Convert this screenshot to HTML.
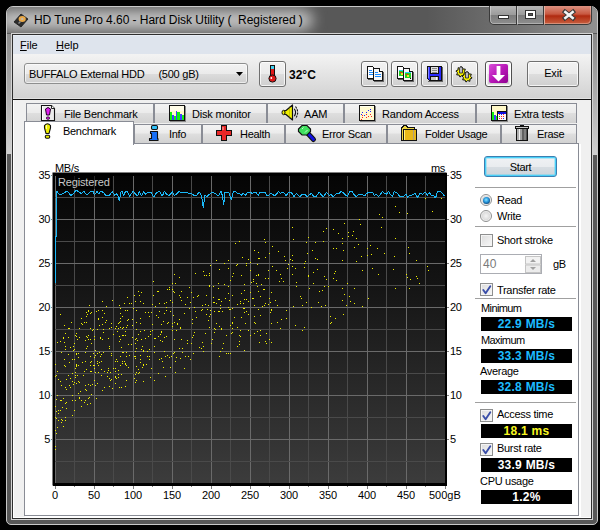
<!DOCTYPE html>
<html><head><meta charset="utf-8"><style>
*{margin:0;padding:0;box-sizing:border-box}
html,body{width:600px;height:530px;overflow:hidden;background:#000;position:relative;font-family:"Liberation Sans",sans-serif}
.t{position:absolute;line-height:13px;white-space:nowrap}
#frame{position:absolute;left:6px;top:6px;width:592px;height:519px;background:#585858;border:1px solid #c8c8c8;border-radius:7px 7px 5px 5px}
#tclip{position:absolute;left:7px;top:7px;width:590px;height:26px;overflow:hidden;border-radius:6px 6px 0 0}
#tright{position:absolute;left:420px;top:0;width:170px;height:26px;background:linear-gradient(90deg,rgba(190,190,190,0) 0%,rgba(190,190,190,0.25) 50%,rgba(190,190,190,0.55) 100%)}
#glow{position:absolute;left:-10px;top:3px;width:316px;height:20px;border-radius:10px;background:#c4c4c4;filter:blur(7px)}
#refl-l{position:absolute;left:7px;top:34px;width:4px;height:120px;background:linear-gradient(#8c8c8c,#d0d0d0)}
#refl-r{position:absolute;left:593px;top:34px;width:4px;height:121px;background:linear-gradient(#888,#d0d0d0)}
#cap{position:absolute;left:489px;top:6px;width:103px;height:19px}
#cmin,#cmax,#cclose{position:absolute;top:0;height:19px;border:1px solid #3a3a3a;border-top:none}
#cmin{left:0;width:28px;border-radius:0 0 0 5px;background:linear-gradient(#b4b4b4,#9c9c9c 48%,#7c7c7c 52%,#8e8e8e);box-shadow:inset 1px 0 0 rgba(255,255,255,0.35),inset 0 -1px 0 rgba(255,255,255,0.3)}
#cmax{left:28px;width:27px;border-left:1px solid #c8c8c8;background:linear-gradient(#b4b4b4,#9c9c9c 48%,#7c7c7c 52%,#8e8e8e);box-shadow:inset 0 -1px 0 rgba(255,255,255,0.3)}
#cclose{left:55px;width:48px;border-radius:0 0 5px 0;border-left:1px solid #e0b0a0;background:linear-gradient(#dc9080,#c85840 45%,#b02a10 55%,#c86040);box-shadow:inset -1px -1px 0 rgba(255,255,255,0.3)}
#client{position:absolute;left:11px;top:33px;width:582px;height:487px;border:1px solid #d4d4d4;background:#2e2e2e}
#client::after{content:"";position:absolute;left:1px;top:1px;right:1px;bottom:1px;background:#f0f0f0;border-left:1px solid #fff;border-bottom:1px solid #fff}
#menubar{position:absolute;left:13px;top:35px;width:578px;height:19px;background:#dee4ed;border-top:1px solid #e8eef6}
#toolbar{position:absolute;left:13px;top:54px;width:578px;height:45px;background:linear-gradient(#f3f3f3 0%,#d2d2d2 97.7%,#e2e2e2 97.8%,#e2e2e2 100%)}
#tbline{position:absolute;left:13px;top:99px;width:578px;height:1px;background:#101010}
#combo{position:absolute;left:24px;top:63px;width:224px;height:21px;border:1px solid #8e8f8f;border-radius:3px;background:linear-gradient(#f2f2f2 0%,#ebebeb 50%,#dddddd 51%,#cfcfcf 100%);box-shadow:inset 0 0 0 1px rgba(255,255,255,0.6)}
.btn{position:absolute;border:1px solid #707070;border-radius:3px;background:linear-gradient(#f2f2f2 0%,#ebebeb 50%,#dddddd 51%,#cfcfcf 100%);box-shadow:inset 0 0 0 1px rgba(255,255,255,0.75)}
.btn.focus{border-color:#505050;box-shadow:inset 0 0 0 1px #fff, inset 0 0 0 2px rgba(255,255,255,0.5)}
.tab{position:absolute;border:1px solid #898c95;border-bottom:none;background:linear-gradient(#f3f3f3 0%,#ebebeb 45%,#dedede 50%,#d2d2d2 100%)}
#panel{position:absolute;left:24px;top:143px;width:555px;height:373px;border:1px solid #898c95;background:#fff;box-shadow:1px 1px 0 #fff,2px 1px 0 #fff}
#seltab{position:absolute;left:24px;top:121px;width:110px;height:24px;border:1px solid #898c95;border-bottom:none;background:#fff}
#start{position:absolute;left:484px;top:156px;width:73px;height:21px;border:1px solid #3c7fb1;border-radius:3px;background:linear-gradient(#f0f2f4 0%,#e9ecef 50%,#d8dee3 51%,#cdd4da 100%);box-shadow:inset 0 0 0 1px #48d0f8,inset 0 0 0 2px rgba(72,208,248,0.35);font-size:11px;line-height:21px;text-align:center;letter-spacing:-0.3px}
.sep{position:absolute;left:475px;width:101px;height:2px;border-top:1px solid #a0a0a0;border-bottom:1px solid #fff}
.radio{position:absolute;width:12px;height:12px;border-radius:50%;border:1px solid #8e8f8f;background:radial-gradient(circle at 50% 50%,#f4f4f4 0%,#dcdcdc 55%,#fafafa 70%,#ffffff 100%)}
.radio.on::after{content:"";position:absolute;left:1.5px;top:1.5px;width:7px;height:7px;border-radius:50%;background:radial-gradient(circle at 45% 40%,#8ae4ff 0%,#2a9ae0 40%,#0a4a80 75%,#1a2a40 100%)}
.chk{position:absolute;width:13px;height:13px;border:1px solid #8e8f8f;background:linear-gradient(135deg,#dcdcdc,#f8f8f8);box-shadow:inset 0 0 0 1px #f4f4f4}
.chk svg{position:absolute;left:0;top:0}
#spin{position:absolute;left:480px;top:254px;width:62px;height:20px;border:1px solid #abadb3;background:#fff;font-size:11px}
#spin span{position:absolute;left:2px;top:3px;color:#7a7a7a;line-height:13px;font-size:12px}
#spinbtn{position:absolute;left:44px;top:1px;width:15px;height:16px;border:1px solid #c8c8c8;background:linear-gradient(#f0f0f0,#e0e0e0)}
.vb{position:absolute;left:481px;width:91px;height:14px;background:#000;font-weight:bold;font-size:12px;line-height:14px;text-align:center;letter-spacing:0.25px}
</style></head>
<body>
<div id="frame"></div>
<div id="tclip"><div id="glow"></div><div id="tright"></div></div>
<div id="refl-l"></div><div id="refl-r"></div>
<div id="cap"><div id="cmin"></div><div id="cmax"></div><div id="cclose"></div></div>
<svg style="position:absolute;left:0;top:0;z-index:4" width="600" height="30" viewBox="0 0 600 30">
<rect x="498.5" y="15.5" width="10" height="3" fill="#fff" stroke="#333" stroke-width="1"/>
<rect x="525.5" y="10.5" width="10" height="8" fill="none" stroke="#333" stroke-width="1"/>
<rect x="527" y="12" width="7" height="5" fill="none" stroke="#fff" stroke-width="2"/>
<rect x="528.5" y="13.5" width="4" height="2" fill="#555" stroke="#333" stroke-width="1"/>
<path d="M565 11.8L573 18.2M573 11.8L565 18.2" stroke="#3a3a3a" stroke-width="4.4" stroke-linecap="square"/>
<path d="M565.3 12L572.7 18M572.7 12L565.3 18" stroke="#f4f4f4" stroke-width="2.5" stroke-linecap="square"/>
</svg>
<svg style="position:absolute;left:13px;top:12px" width="16" height="16" viewBox="0 0 16 16">
<path d="M1 10 L8 2 L15 7 L8 15 Z" fill="#2c2c2c" stroke="#1a1a1a" stroke-width="0.8"/>
<ellipse cx="9.2" cy="7" rx="3.6" ry="3" fill="#e8a848"/>
<ellipse cx="9.2" cy="7" rx="1.2" ry="1" fill="#bbb"/>
<path d="M5 11 L7 9 L8 10 L6 12Z" fill="#888"/>
</svg>
<div class="t" style="left:34px;top:14px;font-size:12px;color:#000;letter-spacing:-0.05px;white-space:pre;">HD Tune Pro 4.60 - Hard Disk Utility (&nbsp; Registered )</div>
<div id="client"></div>
<div id="menubar"></div>
<div id="toolbar"></div>
<div id="tbline"></div>
<div class="t" style="left:20px;top:39px;font-size:11px;color:#000;"><u>F</u>ile</div>
<div class="t" style="left:56px;top:39px;font-size:11px;color:#000;"><u>H</u>elp</div>
<div id="combo"></div>
<div class="t" style="left:29px;top:68px;font-size:11px;color:#000;white-space:pre;letter-spacing:-0.25px;">BUFFALO External HDD&nbsp;&nbsp;&nbsp;&nbsp; (500 gB)</div>
<svg style="position:absolute;left:236px;top:72px" width="8" height="5"><path d="M0 0H7L3.5 4Z" fill="#000"/></svg>
<div class="btn" style="left:259px;top:61px;width:27px;height:26px"></div>
<div class="t" style="left:289px;top:69px;font-size:12px;color:#000;font-weight:bold;">32°C</div>
<div class="btn" style="left:361px;top:61px;width:27px;height:26px"></div>
<div class="btn" style="left:391px;top:61px;width:27px;height:26px"></div>
<div class="btn" style="left:421px;top:61px;width:27px;height:26px"></div>
<div class="btn" style="left:451px;top:61px;width:27px;height:26px"></div>
<div class="btn focus" style="left:485px;top:61px;width:27px;height:26px"></div>
<div class="btn" style="left:527px;top:61px;width:52px;height:26px"></div>
<div class="t" style="left:527px;top:67px;font-size:11px;color:#000;width:52px;text-align:center;letter-spacing:-0.2px;">Exit</div>
<svg style="position:absolute;left:489px;top:64px" width="20" height="20" viewBox="0 0 20 20">
<defs><linearGradient id="pg" x1="0" y1="0" x2="1" y2="1"><stop offset="0" stop-color="#d850d8"/><stop offset="0.5" stop-color="#b818b8"/><stop offset="1" stop-color="#900090"/></linearGradient></defs>
<rect x="0" y="0" width="19" height="19" rx="2" fill="url(#pg)"/>
<path d="M7.6 2H11.4V11H16L9.5 17.5L3 11H7.6Z" fill="#fff"/>
</svg>
<div class="tab" style="left:26px;top:103px;width:128px;height:20px"></div>
<div class="tab" style="left:154px;top:103px;width:113px;height:20px"></div>
<div class="tab" style="left:267px;top:103px;width:77px;height:20px"></div>
<div class="tab" style="left:344px;top:103px;width:132px;height:20px"></div>
<div class="tab" style="left:476px;top:103px;width:101px;height:20px"></div>
<div class="tab" style="left:134px;top:124px;width:68px;height:19px"></div>
<div class="tab" style="left:202px;top:124px;width:83px;height:19px"></div>
<div class="tab" style="left:285px;top:124px;width:102px;height:19px"></div>
<div class="tab" style="left:387px;top:124px;width:114px;height:19px"></div>
<div class="tab" style="left:501px;top:124px;width:76px;height:19px"></div>
<div id="panel"></div>
<div id="seltab"></div>
<div class="t" style="left:64px;top:108px;font-size:11px;color:#000;letter-spacing:-0.2px;">File Benchmark</div>
<div class="t" style="left:192px;top:108px;font-size:11px;color:#000;letter-spacing:-0.2px;">Disk monitor</div>
<div class="t" style="left:304px;top:108px;font-size:11px;color:#000;letter-spacing:-0.2px;">AAM</div>
<div class="t" style="left:382px;top:108px;font-size:11px;color:#000;letter-spacing:-0.2px;">Random Access</div>
<div class="t" style="left:514px;top:108px;font-size:11px;color:#000;letter-spacing:-0.2px;">Extra tests</div>
<div class="t" style="left:169px;top:128px;font-size:11px;color:#000;letter-spacing:-0.3px;">Info</div>
<div class="t" style="left:240px;top:128px;font-size:11px;color:#000;letter-spacing:-0.3px;">Health</div>
<div class="t" style="left:322px;top:128px;font-size:11px;color:#000;letter-spacing:-0.3px;">Error Scan</div>
<div class="t" style="left:425px;top:128px;font-size:11px;color:#000;letter-spacing:-0.3px;">Folder Usage</div>
<div class="t" style="left:537px;top:128px;font-size:11px;color:#000;letter-spacing:-0.3px;">Erase</div>
<div class="t" style="left:63px;top:125px;font-size:11px;color:#000;letter-spacing:-0.3px;">Benchmark</div>
<svg style="position:absolute;left:0;top:0;z-index:5" width="600" height="530" viewBox="0 0 600 530">
<g shape-rendering="crispEdges">
<!-- docs icon 1 -->
<path d="M367.5 66.5H372.5L374.5 68.5V78.5H367.5Z" fill="#fff" stroke="#111"/>
<rect x="369" y="70" width="3" height="1" fill="#1a8aff"/><rect x="369" y="72" width="5" height="1" fill="#1a8aff"/><rect x="369" y="74" width="5" height="1" fill="#1a8aff"/>
<rect x="368" y="79" width="6" height="1" fill="#555"/>
<path d="M373.5 68.5H379.5L382.5 71.5V80.5H373.5Z" fill="#f6f6f6" stroke="#111"/>
<path d="M379.5 68.5V71.5H382.5" fill="#fff" stroke="#111"/>
<rect x="375" y="72" width="3" height="1" fill="#1a8aff"/><rect x="375" y="74" width="6" height="1" fill="#1a8aff"/><rect x="375" y="76" width="6" height="1" fill="#1a8aff"/>
<rect x="374" y="81" width="10" height="1" fill="#666"/><rect x="383" y="72" width="1" height="10" fill="#666"/>
<!-- docs icon 2 -->
<path d="M397.5 66.5H402.5L404.5 68.5V78.5H397.5Z" fill="#fff" stroke="#111"/>
<rect x="399" y="70" width="5" height="1" fill="#30c8f8"/><rect x="399" y="71" width="5" height="5" fill="#20d020"/><rect x="400" y="72" width="2" height="1" fill="#f02020"/><rect x="401" y="73" width="2" height="2" fill="#f0e020"/>
<rect x="398" y="79" width="6" height="1" fill="#555"/>
<path d="M403.5 68.5H409.5L412.5 71.5V80.5H403.5Z" fill="#f6f6f6" stroke="#111"/>
<path d="M409.5 68.5V71.5H412.5" fill="#fff" stroke="#111"/>
<rect x="405" y="72" width="6" height="1" fill="#30c8f8"/><rect x="405" y="73" width="6" height="5" fill="#20d020"/><rect x="406" y="74" width="2" height="1" fill="#f02020"/><rect x="407" y="75" width="2" height="2" fill="#f0e020"/><rect x="410" y="78" width="1" height="1" fill="#111"/>
<rect x="404" y="81" width="10" height="1" fill="#666"/><rect x="413" y="72" width="1" height="10" fill="#666"/>
<!-- floppy -->
<path d="M427.5 66.5H441.5V80.5H429.5L427.5 78.5Z" fill="#2a2aff" stroke="#111"/>
<rect x="428" y="67" width="1" height="11" fill="#8080ff"/>
<rect x="430.5" y="66.5" width="8" height="7" fill="#e0e0e0" stroke="#111"/>
<rect x="432" y="68" width="5" height="1" fill="#888"/><rect x="432" y="70" width="5" height="1" fill="#888"/><rect x="432" y="72" width="5" height="1" fill="#888"/>
<rect x="430.5" y="76.5" width="8" height="4" fill="#c8c8c8" stroke="#111"/>
<rect x="436" y="77" width="1" height="3" fill="#fff"/>
<rect x="428" y="81" width="15" height="1" fill="#666"/><rect x="442" y="67" width="1" height="15" fill="#666"/>
</g>
<!-- gears -->
<g>
<polygon points="466.10,73.03 463.99,74.01 463.87,76.33 461.69,75.53 459.97,77.10 458.99,74.99 456.67,74.87 457.47,72.69 455.90,70.97 458.01,69.99 458.13,67.67 460.31,68.47 462.03,66.90 463.01,69.01 465.33,69.13 464.53,71.31" fill="#f4f000" stroke="#111" stroke-width="1"/>
<polygon points="472.10,78.03 469.99,79.01 469.87,81.33 467.69,80.53 465.97,82.10 464.99,79.99 462.67,79.87 463.47,77.69 461.90,75.97 464.01,74.99 464.13,72.67 466.31,73.47 468.03,71.90 469.01,74.01 471.33,74.13 470.53,76.31" fill="#f4f000" stroke="#111" stroke-width="1"/>
<path d="M459.5 73V68.5L461 66L462.5 68.5V73Z" fill="#b8b8c0" stroke="#222" stroke-width="0.8"/>
<path d="M465.5 78V73.5L467 71L468.5 73.5V78Z" fill="#b8b8c0" stroke="#222" stroke-width="0.8"/>
</g>

<g shape-rendering="crispEdges">
</g>
<path d="M41.5 105.5H51.5L54.5 108.5V120.5H41.5Z" fill="#ececec" stroke="#111" stroke-width="1.1"/>
<path d="M51.5 105.5V108.5H54.5" fill="#fff" stroke="#111" stroke-width="0.9"/>
<rect x="42" y="106" width="1" height="14" fill="#fff"/>

<path d="M45.5 109Q48 106 50.5 109L49.5 115H46.5Z" fill="#e020f0" stroke="#200020" stroke-width="1"/>
<rect x="46.5" y="117" width="3" height="2.2" rx="0.8" fill="#e020f0" stroke="#200020" stroke-width="0.9"/>
<!-- Benchmark yellow ! -->
<path d="M44.5 125.5Q47.5 122 50.5 125.5V128L49 133.5H46L44.5 128Z" fill="#f0f000" stroke="#111" stroke-width="1.1"/>
<rect x="45.3" y="135.3" width="4.4" height="3" rx="1.2" fill="#e8e800" stroke="#111" stroke-width="1.1"/>
<rect x="46" y="125" width="1" height="4" fill="#ffffa0"/>
<g shape-rendering="crispEdges">
<!-- Disk monitor -->
<rect x="169.5" y="105.5" width="15" height="15" fill="#fff8c8" stroke="#111"/>
<rect x="170" y="106" width="14" height="5" fill="#fffce8"/>
<rect x="170" y="112" width="2" height="8" fill="#10f010"/><rect x="172" y="115" width="2" height="5" fill="#4040ff"/><rect x="174" y="116" width="2" height="4" fill="#10f010"/><rect x="176" y="111" width="1" height="9" fill="#4040ff"/><rect x="177" y="112" width="3" height="8" fill="#10f010"/><rect x="180" y="114" width="2" height="6" fill="#4040ff"/><rect x="182" y="115" width="2" height="5" fill="#10f010"/>
<rect x="170" y="121" width="16" height="1" fill="#888"/><rect x="185" y="106" width="1" height="16" fill="#888"/>
</g>
<!-- AAM speaker -->
<path d="M284.5 110.5H286L292.5 105V120L286 114.5H284.5Z" fill="#f0f000" stroke="#111" stroke-width="1.2" stroke-linejoin="round"/>
<ellipse cx="283.5" cy="112.5" rx="1.5" ry="2.2" fill="#f0f000" stroke="#111" stroke-width="1"/>
<path d="M289.5 106.5V119" stroke="#707000" stroke-width="0.6" stroke-dasharray="1 1"/>
<path d="M294.3 108.8Q296.8 112.5 294.3 116.2" stroke="#111" stroke-width="1.1" fill="none"/>
<path d="M295.5 106.5Q299.8 112.5 295.5 118.5" stroke="#111" stroke-width="1.1" fill="none" stroke-dasharray="2.2 1"/>
<g shape-rendering="crispEdges">
<!-- Random Access -->
<rect x="359.5" y="105.5" width="15" height="15" fill="#fffad0" stroke="#111"/>
<rect x="360" y="106" width="14" height="1" fill="#fffff0"/>
<g fill="#2020ff"><rect x="362" y="112" width="1" height="1"/><rect x="361" y="114" width="1" height="1"/><rect x="364" y="115" width="1" height="1"/><rect x="366" y="112" width="1" height="1"/><rect x="368" y="110" width="1" height="1"/><rect x="370" y="109" width="1" height="1"/><rect x="370" y="111" width="1" height="1"/></g>
<g fill="#ff2020"><rect x="362" y="115" width="1" height="1"/><rect x="362" y="117" width="1" height="1"/><rect x="366" y="114" width="1" height="1"/><rect x="366" y="117" width="1" height="1"/><rect x="368" y="116" width="1" height="1"/><rect x="370" y="114" width="1" height="1"/><rect x="371" y="116" width="1" height="1"/><rect x="361" y="119" width="1" height="1"/></g>
<rect x="360" y="121" width="16" height="1" fill="#888"/><rect x="375" y="106" width="1" height="16" fill="#888"/>
<!-- Extra tests -->
<rect x="491.5" y="105.5" width="15" height="15" fill="#fff8c8" stroke="#111"/>
<rect x="492" y="112" width="2" height="8" fill="#10f010"/><rect x="494" y="115" width="2" height="5" fill="#4040ff"/><rect x="496" y="116" width="1" height="4" fill="#10f010"/>
<rect x="497.5" y="111.5" width="9" height="9" fill="#f8f8f8" stroke="#111"/>
<rect x="498" y="112" width="8" height="1.5" fill="#1010e0"/>
<g fill="#ff2020"><rect x="499" y="114" width="1" height="1"/><rect x="503" y="114" width="1" height="1"/><rect x="501" y="116" width="1" height="1"/><rect x="503" y="116" width="1" height="1"/><rect x="499" y="118" width="1" height="1"/><rect x="501" y="118" width="1" height="1"/></g>
<g fill="#2020ff"><rect x="501" y="114" width="1" height="1"/><rect x="503" y="118" width="1" height="1"/></g>
<rect x="499" y="116" width="1" height="1" fill="#10c010"/>
<rect x="492" y="121" width="16" height="1" fill="#888"/><rect x="507" y="106" width="1" height="16" fill="#888"/>
</g>
<!-- Info -->
<rect x="151.5" y="125.5" width="6" height="4" rx="1.2" fill="#30c0f8" stroke="#111" stroke-width="1.1"/>
<path d="M150.5 131.5H157.5V138.5H158V140.5H149.5V138.5H151.5V133.5H150.5Z" fill="#1870f8" stroke="#111" stroke-width="1.1" stroke-linejoin="round"/>
<!-- Health -->
<path d="M221.5 125.5H226.5V130.5H231.5V135.5H226.5V140.5H221.5V135.5H216.5V130.5H221.5Z" fill="#e82828" stroke="#111" stroke-width="1.2" shape-rendering="crispEdges"/>
<rect x="222" y="127" width="2" height="3" fill="#f87070" shape-rendering="crispEdges"/>
<!-- Error scan -->
<path d="M307.5 133L313.5 139.5" stroke="#111" stroke-width="5" stroke-linecap="round"/>
<path d="M307.5 133L313.5 139.5" stroke="#1010e0" stroke-width="2.8" stroke-linecap="round"/>
<path d="M302 125.5H307L310.5 129V131.5L307 135H302L298.5 131.5V129Z" fill="#40e060" stroke="#111" stroke-width="1.2"/>
<path d="M302 129L303.5 127.5M305 132.5L307.5 130" stroke="#d0ffd0" stroke-width="0.9"/>
<!-- Folder -->
<g shape-rendering="crispEdges">
<path d="M401.5 127.5H402.5L403.5 125.5H406.5L407.5 127.5H414.5V140.5H401.5Z" fill="#f0d840" stroke="#111"/>
<rect x="403.5" y="129.5" width="13" height="11" fill="#e8b818" stroke="#111"/>
<rect x="404" y="130" width="1" height="10" fill="#fff080"/>
<rect x="413" y="130" width="1" height="10" fill="#b0a080"/>
<!-- Trash -->
<rect x="515.5" y="126.5" width="13" height="2" fill="#c8c8c8" stroke="#111"/>
<rect x="520.5" y="125.5" width="3" height="1" fill="#888" stroke="#111"/>
<path d="M516.5 128.5H527.5V140.5H516.5Z" fill="#909090" stroke="#111"/>
<rect x="517" y="129" width="2" height="11" fill="#b0b0b0"/><rect x="519" y="129" width="1" height="11" fill="#f0f0f0"/><rect x="520" y="129" width="2" height="11" fill="#a0a0a0"/><rect x="522" y="129" width="2" height="11" fill="#606060"/><rect x="524" y="129" width="2" height="11" fill="#808080"/><rect x="526" y="129" width="1" height="11" fill="#505050"/>
</g>
<!-- thermometer -->
<g shape-rendering="crispEdges">
<rect x="270.5" y="65.5" width="4" height="11" fill="#e01818" stroke="#111"/>
<rect x="271" y="66" width="3" height="3" fill="#40d0f0"/>
</g>
<circle cx="272.5" cy="78.5" r="3.6" fill="#e01818" stroke="#111" stroke-width="1"/>
<rect x="271" y="76" width="3" height="3" fill="#e01818"/>
<circle cx="271.3" cy="78" r="0.9" fill="#fff"/>
</svg>
<svg style="position:absolute;left:0;top:0" width="600" height="530" viewBox="0 0 600 530"><defs><linearGradient id="cbg" x1="0" y1="0" x2="0" y2="1"><stop offset="0" stop-color="#050505"/><stop offset="0.35" stop-color="#141414"/><stop offset="1" stop-color="#3c3c3c"/></linearGradient></defs><rect x="52.5" y="172.5" width="394" height="313" fill="#000"/><rect x="55" y="175" width="390" height="308" fill="url(#cbg)"/><line x1="55.5" y1="175" x2="55.5" y2="483" stroke="#6a6a6a" stroke-width="1"/><line x1="74.5" y1="175" x2="74.5" y2="483" stroke="#4a4a4a" stroke-width="1"/><line x1="94.5" y1="175" x2="94.5" y2="483" stroke="#6a6a6a" stroke-width="1"/><line x1="113.5" y1="175" x2="113.5" y2="483" stroke="#4a4a4a" stroke-width="1"/><line x1="133.5" y1="175" x2="133.5" y2="483" stroke="#6a6a6a" stroke-width="1"/><line x1="152.5" y1="175" x2="152.5" y2="483" stroke="#4a4a4a" stroke-width="1"/><line x1="172.5" y1="175" x2="172.5" y2="483" stroke="#6a6a6a" stroke-width="1"/><line x1="191.5" y1="175" x2="191.5" y2="483" stroke="#4a4a4a" stroke-width="1"/><line x1="211.5" y1="175" x2="211.5" y2="483" stroke="#6a6a6a" stroke-width="1"/><line x1="230.5" y1="175" x2="230.5" y2="483" stroke="#4a4a4a" stroke-width="1"/><line x1="250.5" y1="175" x2="250.5" y2="483" stroke="#6a6a6a" stroke-width="1"/><line x1="269.5" y1="175" x2="269.5" y2="483" stroke="#4a4a4a" stroke-width="1"/><line x1="289.5" y1="175" x2="289.5" y2="483" stroke="#6a6a6a" stroke-width="1"/><line x1="308.5" y1="175" x2="308.5" y2="483" stroke="#4a4a4a" stroke-width="1"/><line x1="328.5" y1="175" x2="328.5" y2="483" stroke="#6a6a6a" stroke-width="1"/><line x1="347.5" y1="175" x2="347.5" y2="483" stroke="#4a4a4a" stroke-width="1"/><line x1="367.5" y1="175" x2="367.5" y2="483" stroke="#6a6a6a" stroke-width="1"/><line x1="386.5" y1="175" x2="386.5" y2="483" stroke="#4a4a4a" stroke-width="1"/><line x1="406.5" y1="175" x2="406.5" y2="483" stroke="#6a6a6a" stroke-width="1"/><line x1="425.5" y1="175" x2="425.5" y2="483" stroke="#4a4a4a" stroke-width="1"/><line x1="445.5" y1="175" x2="445.5" y2="483" stroke="#6a6a6a" stroke-width="1"/><line x1="55" y1="175.5" x2="445" y2="175.5" stroke="#6a6a6a" stroke-width="1"/><line x1="55" y1="197.5" x2="445" y2="197.5" stroke="#4a4a4a" stroke-width="1"/><line x1="55" y1="219.5" x2="445" y2="219.5" stroke="#6a6a6a" stroke-width="1"/><line x1="55" y1="241.5" x2="445" y2="241.5" stroke="#4a4a4a" stroke-width="1"/><line x1="55" y1="263.5" x2="445" y2="263.5" stroke="#6a6a6a" stroke-width="1"/><line x1="55" y1="285.5" x2="445" y2="285.5" stroke="#4a4a4a" stroke-width="1"/><line x1="55" y1="307.5" x2="445" y2="307.5" stroke="#6a6a6a" stroke-width="1"/><line x1="55" y1="329.5" x2="445" y2="329.5" stroke="#4a4a4a" stroke-width="1"/><line x1="55" y1="351.5" x2="445" y2="351.5" stroke="#6a6a6a" stroke-width="1"/><line x1="55" y1="373.5" x2="445" y2="373.5" stroke="#4a4a4a" stroke-width="1"/><line x1="55" y1="395.5" x2="445" y2="395.5" stroke="#6a6a6a" stroke-width="1"/><line x1="55" y1="417.5" x2="445" y2="417.5" stroke="#4a4a4a" stroke-width="1"/><line x1="55" y1="439.5" x2="445" y2="439.5" stroke="#6a6a6a" stroke-width="1"/><line x1="55" y1="461.5" x2="445" y2="461.5" stroke="#4a4a4a" stroke-width="1"/><line x1="55" y1="483.5" x2="445" y2="483.5" stroke="#6a6a6a" stroke-width="1"/><rect x="53" y="173" width="393" height="3" fill="#000"/><rect x="53" y="483" width="394" height="3" fill="#000"/><rect x="53" y="173" width="2" height="313" fill="#000"/><rect x="445" y="173" width="2" height="313" fill="#000"/><rect x="56" y="176" width="56" height="13" fill="#000" fill-opacity="0.6"/><line x1="51" y1="175.5" x2="53" y2="175.5" stroke="#808080"/><line x1="447" y1="175.5" x2="449" y2="175.5" stroke="#808080"/><line x1="51" y1="219.5" x2="53" y2="219.5" stroke="#808080"/><line x1="447" y1="219.5" x2="449" y2="219.5" stroke="#808080"/><line x1="51" y1="263.5" x2="53" y2="263.5" stroke="#808080"/><line x1="447" y1="263.5" x2="449" y2="263.5" stroke="#808080"/><line x1="51" y1="307.5" x2="53" y2="307.5" stroke="#808080"/><line x1="447" y1="307.5" x2="449" y2="307.5" stroke="#808080"/><line x1="51" y1="351.5" x2="53" y2="351.5" stroke="#808080"/><line x1="447" y1="351.5" x2="449" y2="351.5" stroke="#808080"/><line x1="51" y1="395.5" x2="53" y2="395.5" stroke="#808080"/><line x1="447" y1="395.5" x2="449" y2="395.5" stroke="#808080"/><line x1="51" y1="439.5" x2="53" y2="439.5" stroke="#808080"/><line x1="447" y1="439.5" x2="449" y2="439.5" stroke="#808080"/><line x1="55.5" y1="486" x2="55.5" y2="489" stroke="#808080"/><line x1="74.5" y1="486" x2="74.5" y2="487" stroke="#808080"/><line x1="94.5" y1="486" x2="94.5" y2="489" stroke="#808080"/><line x1="113.5" y1="486" x2="113.5" y2="487" stroke="#808080"/><line x1="133.5" y1="486" x2="133.5" y2="489" stroke="#808080"/><line x1="152.5" y1="486" x2="152.5" y2="487" stroke="#808080"/><line x1="172.5" y1="486" x2="172.5" y2="489" stroke="#808080"/><line x1="191.5" y1="486" x2="191.5" y2="487" stroke="#808080"/><line x1="211.5" y1="486" x2="211.5" y2="489" stroke="#808080"/><line x1="230.5" y1="486" x2="230.5" y2="487" stroke="#808080"/><line x1="250.5" y1="486" x2="250.5" y2="489" stroke="#808080"/><line x1="269.5" y1="486" x2="269.5" y2="487" stroke="#808080"/><line x1="289.5" y1="486" x2="289.5" y2="489" stroke="#808080"/><line x1="308.5" y1="486" x2="308.5" y2="487" stroke="#808080"/><line x1="328.5" y1="486" x2="328.5" y2="489" stroke="#808080"/><line x1="347.5" y1="486" x2="347.5" y2="487" stroke="#808080"/><line x1="367.5" y1="486" x2="367.5" y2="489" stroke="#808080"/><line x1="386.5" y1="486" x2="386.5" y2="487" stroke="#808080"/><line x1="406.5" y1="486" x2="406.5" y2="489" stroke="#808080"/><line x1="425.5" y1="486" x2="425.5" y2="487" stroke="#808080"/><line x1="445.5" y1="486" x2="445.5" y2="489" stroke="#808080"/><path d="M55 364h1v1h-1zM55 376h1v1h-1zM55 406h1v1h-1zM55 417h1v1h-1zM55 430h1v1h-1zM55 446h1v1h-1zM55 449h1v1h-1zM56 375h1v1h-1zM56 399h1v1h-1zM56 411h1v1h-1zM56 418h1v1h-1zM56 433h1v1h-1zM57 342h1v1h-1zM57 371h1v1h-1zM57 395h1v1h-1zM57 427h1v1h-1zM58 379h1v1h-1zM58 410h1v1h-1zM58 413h1v1h-1zM58 420h1v1h-1zM60 314h1v1h-1zM60 341h1v1h-1zM60 381h1v1h-1zM60 400h1v1h-1zM60 410h1v1h-1zM61 352h1v1h-1zM61 385h1v1h-1zM61 400h1v1h-1zM61 419h1v1h-1zM61 422h1v1h-1zM62 407h1v1h-1zM62 420h1v1h-1zM63 337h1v1h-1zM63 338h1v1h-1zM63 398h1v1h-1zM63 426h1v1h-1zM64 325h1v1h-1zM64 342h1v1h-1zM64 359h1v1h-1zM64 365h1v1h-1zM65 333h1v1h-1zM65 346h1v1h-1zM65 349h1v1h-1zM65 366h1v1h-1zM65 387h1v1h-1zM65 403h1v1h-1zM65 417h1v1h-1zM65 420h1v1h-1zM66 379h1v1h-1zM66 389h1v1h-1zM66 402h1v1h-1zM66 408h1v1h-1zM68 328h1v1h-1zM68 337h1v1h-1zM68 354h1v1h-1zM68 375h1v1h-1zM69 328h1v1h-1zM69 362h1v1h-1zM69 385h1v1h-1zM70 347h1v1h-1zM70 378h1v1h-1zM70 387h1v1h-1zM71 322h1v1h-1zM72 359h1v1h-1zM72 373h1v1h-1zM72 381h1v1h-1zM72 395h1v1h-1zM72 400h1v1h-1zM72 415h1v1h-1zM73 346h1v1h-1zM73 350h1v1h-1zM73 384h1v1h-1zM74 343h1v1h-1zM74 349h1v1h-1zM74 359h1v1h-1zM74 382h1v1h-1zM74 410h1v1h-1zM75 335h1v1h-1zM75 368h1v1h-1zM75 372h1v1h-1zM75 375h1v1h-1zM75 377h1v1h-1zM75 400h1v1h-1zM76 333h1v1h-1zM76 336h1v1h-1zM76 353h1v1h-1zM76 354h1v1h-1zM76 364h1v1h-1zM76 365h1v1h-1zM76 366h1v1h-1zM76 383h1v1h-1zM77 339h1v1h-1zM77 375h1v1h-1zM78 353h1v1h-1zM78 357h1v1h-1zM78 365h1v1h-1zM78 381h1v1h-1zM78 393h1v1h-1zM79 328h1v1h-1zM79 337h1v1h-1zM79 382h1v1h-1zM79 397h1v1h-1zM79 398h1v1h-1zM80 391h1v1h-1zM81 318h1v1h-1zM81 323h1v1h-1zM81 400h1v1h-1zM81 406h1v1h-1zM82 324h1v1h-1zM82 362h1v1h-1zM83 375h1v1h-1zM84 322h1v1h-1zM84 371h1v1h-1zM84 402h1v1h-1zM85 340h1v1h-1zM85 352h1v1h-1zM85 361h1v1h-1zM85 385h1v1h-1zM85 389h1v1h-1zM85 400h1v1h-1zM86 312h1v1h-1zM86 316h1v1h-1zM86 322h1v1h-1zM86 336h1v1h-1zM86 348h1v1h-1zM86 369h1v1h-1zM86 390h1v1h-1zM87 314h1v1h-1zM87 337h1v1h-1zM87 346h1v1h-1zM87 404h1v1h-1zM88 310h1v1h-1zM88 311h1v1h-1zM88 335h1v1h-1zM88 339h1v1h-1zM88 384h1v1h-1zM88 398h1v1h-1zM89 305h1v1h-1zM89 397h1v1h-1zM90 313h1v1h-1zM90 328h1v1h-1zM90 339h1v1h-1zM90 356h1v1h-1zM90 362h1v1h-1zM90 365h1v1h-1zM90 371h1v1h-1zM90 385h1v1h-1zM90 403h1v1h-1zM91 312h1v1h-1zM91 343h1v1h-1zM91 361h1v1h-1zM91 371h1v1h-1zM91 394h1v1h-1zM92 330h1v1h-1zM92 384h1v1h-1zM93 329h1v1h-1zM93 353h1v1h-1zM93 365h1v1h-1zM94 336h1v1h-1zM94 339h1v1h-1zM94 357h1v1h-1zM94 365h1v1h-1zM94 368h1v1h-1zM94 380h1v1h-1zM95 350h1v1h-1zM95 355h1v1h-1zM95 372h1v1h-1zM95 385h1v1h-1zM96 311h1v1h-1zM96 398h1v1h-1zM97 329h1v1h-1zM97 353h1v1h-1zM97 361h1v1h-1zM97 363h1v1h-1zM97 383h1v1h-1zM98 310h1v1h-1zM98 318h1v1h-1zM98 319h1v1h-1zM98 365h1v1h-1zM98 372h1v1h-1zM99 325h1v1h-1zM99 352h1v1h-1zM99 362h1v1h-1zM100 337h1v1h-1zM100 338h1v1h-1zM100 356h1v1h-1zM101 354h1v1h-1zM101 361h1v1h-1zM101 369h1v1h-1zM101 375h1v1h-1zM102 301h1v1h-1zM102 310h1v1h-1zM102 317h1v1h-1zM102 324h1v1h-1zM102 339h1v1h-1zM102 390h1v1h-1zM103 329h1v1h-1zM103 332h1v1h-1zM103 352h1v1h-1zM104 313h1v1h-1zM104 371h1v1h-1zM104 387h1v1h-1zM105 322h1v1h-1zM106 306h1v1h-1zM106 320h1v1h-1zM107 372h1v1h-1zM107 376h1v1h-1zM108 338h1v1h-1zM108 368h1v1h-1zM108 370h1v1h-1zM109 328h1v1h-1zM109 346h1v1h-1zM109 348h1v1h-1zM109 378h1v1h-1zM109 386h1v1h-1zM110 372h1v1h-1zM110 380h1v1h-1zM111 323h1v1h-1zM111 327h1v1h-1zM111 353h1v1h-1zM111 355h1v1h-1zM111 379h1v1h-1zM112 300h1v1h-1zM112 388h1v1h-1zM113 334h1v1h-1zM113 368h1v1h-1zM115 328h1v1h-1zM115 361h1v1h-1zM115 368h1v1h-1zM115 371h1v1h-1zM115 376h1v1h-1zM115 377h1v1h-1zM115 383h1v1h-1zM116 326h1v1h-1zM116 359h1v1h-1zM116 378h1v1h-1zM117 331h1v1h-1zM117 361h1v1h-1zM118 323h1v1h-1zM118 328h1v1h-1zM118 370h1v1h-1zM118 374h1v1h-1zM118 377h1v1h-1zM119 305h1v1h-1zM119 322h1v1h-1zM119 336h1v1h-1zM119 341h1v1h-1zM119 387h1v1h-1zM120 308h1v1h-1zM120 313h1v1h-1zM120 318h1v1h-1zM120 321h1v1h-1zM120 327h1v1h-1zM120 339h1v1h-1zM120 356h1v1h-1zM120 365h1v1h-1zM121 347h1v1h-1zM121 374h1v1h-1zM121 387h1v1h-1zM122 316h1v1h-1zM122 328h1v1h-1zM122 335h1v1h-1zM122 352h1v1h-1zM122 361h1v1h-1zM122 363h1v1h-1zM123 327h1v1h-1zM123 335h1v1h-1zM123 352h1v1h-1zM124 303h1v1h-1zM124 361h1v1h-1zM125 310h1v1h-1zM125 331h1v1h-1zM125 335h1v1h-1zM125 363h1v1h-1zM125 364h1v1h-1zM125 386h1v1h-1zM126 327h1v1h-1zM126 352h1v1h-1zM126 356h1v1h-1zM126 365h1v1h-1zM126 380h1v1h-1zM127 297h1v1h-1zM127 310h1v1h-1zM127 320h1v1h-1zM127 325h1v1h-1zM128 319h1v1h-1zM128 344h1v1h-1zM128 367h1v1h-1zM129 303h1v1h-1zM129 355h1v1h-1zM131 303h1v1h-1zM131 344h1v1h-1zM132 319h1v1h-1zM132 325h1v1h-1zM132 337h1v1h-1zM133 308h1v1h-1zM134 295h1v1h-1zM134 356h1v1h-1zM134 378h1v1h-1zM135 301h1v1h-1zM135 339h1v1h-1zM135 343h1v1h-1zM135 351h1v1h-1zM135 356h1v1h-1zM135 358h1v1h-1zM135 374h1v1h-1zM135 382h1v1h-1zM136 310h1v1h-1zM136 322h1v1h-1zM136 329h1v1h-1zM136 338h1v1h-1zM136 348h1v1h-1zM136 366h1v1h-1zM136 372h1v1h-1zM136 380h1v1h-1zM137 340h1v1h-1zM138 291h1v1h-1zM138 334h1v1h-1zM138 369h1v1h-1zM138 373h1v1h-1zM139 295h1v1h-1zM139 372h1v1h-1zM140 301h1v1h-1zM140 318h1v1h-1zM140 323h1v1h-1zM140 331h1v1h-1zM140 355h1v1h-1zM140 359h1v1h-1zM140 362h1v1h-1zM141 292h1v1h-1zM141 339h1v1h-1zM141 349h1v1h-1zM142 346h1v1h-1zM142 367h1v1h-1zM143 303h1v1h-1zM143 350h1v1h-1zM143 351h1v1h-1zM143 364h1v1h-1zM143 365h1v1h-1zM143 381h1v1h-1zM144 330h1v1h-1zM145 312h1v1h-1zM145 338h1v1h-1zM146 364h1v1h-1zM147 351h1v1h-1zM147 356h1v1h-1zM148 312h1v1h-1zM148 336h1v1h-1zM149 316h1v1h-1zM149 349h1v1h-1zM149 356h1v1h-1zM149 359h1v1h-1zM150 331h1v1h-1zM150 334h1v1h-1zM150 377h1v1h-1zM151 312h1v1h-1zM151 368h1v1h-1zM152 304h1v1h-1zM152 324h1v1h-1zM152 330h1v1h-1zM153 281h1v1h-1zM153 295h1v1h-1zM154 338h1v1h-1zM154 346h1v1h-1zM154 352h1v1h-1zM154 380h1v1h-1zM155 306h1v1h-1zM155 338h1v1h-1zM156 315h1v1h-1zM157 291h1v1h-1zM158 291h1v1h-1zM158 317h1v1h-1zM158 336h1v1h-1zM158 373h1v1h-1zM159 303h1v1h-1zM159 311h1v1h-1zM159 359h1v1h-1zM160 334h1v1h-1zM160 340h1v1h-1zM161 324h1v1h-1zM161 331h1v1h-1zM161 332h1v1h-1zM161 358h1v1h-1zM162 341h1v1h-1zM162 361h1v1h-1zM163 321h1v1h-1zM163 367h1v1h-1zM164 303h1v1h-1zM164 313h1v1h-1zM164 337h1v1h-1zM164 351h1v1h-1zM165 356h1v1h-1zM165 376h1v1h-1zM166 302h1v1h-1zM166 307h1v1h-1zM166 310h1v1h-1zM166 336h1v1h-1zM167 289h1v1h-1zM167 323h1v1h-1zM167 355h1v1h-1zM168 322h1v1h-1zM169 287h1v1h-1zM169 289h1v1h-1zM169 357h1v1h-1zM170 300h1v1h-1zM170 311h1v1h-1zM170 367h1v1h-1zM171 356h1v1h-1zM172 283h1v1h-1zM172 289h1v1h-1zM172 302h1v1h-1zM172 323h1v1h-1zM172 326h1v1h-1zM172 330h1v1h-1zM173 291h1v1h-1zM173 315h1v1h-1zM173 353h1v1h-1zM174 274h1v1h-1zM174 292h1v1h-1zM174 322h1v1h-1zM174 339h1v1h-1zM174 352h1v1h-1zM175 283h1v1h-1zM175 361h1v1h-1zM175 372h1v1h-1zM176 330h1v1h-1zM176 357h1v1h-1zM177 323h1v1h-1zM177 324h1v1h-1zM179 277h1v1h-1zM179 295h1v1h-1zM179 319h1v1h-1zM179 348h1v1h-1zM180 297h1v1h-1zM180 327h1v1h-1zM180 328h1v1h-1zM180 358h1v1h-1zM181 291h1v1h-1zM181 300h1v1h-1zM181 339h1v1h-1zM182 348h1v1h-1zM182 352h1v1h-1zM184 313h1v1h-1zM184 368h1v1h-1zM185 304h1v1h-1zM185 356h1v1h-1zM187 297h1v1h-1zM187 340h1v1h-1zM187 343h1v1h-1zM188 356h1v1h-1zM189 287h1v1h-1zM189 308h1v1h-1zM190 302h1v1h-1zM190 359h1v1h-1zM191 292h1v1h-1zM191 343h1v1h-1zM192 319h1v1h-1zM192 323h1v1h-1zM192 337h1v1h-1zM193 297h1v1h-1zM193 335h1v1h-1zM193 353h1v1h-1zM194 307h1v1h-1zM194 332h1v1h-1zM195 273h1v1h-1zM195 311h1v1h-1zM196 317h1v1h-1zM197 296h1v1h-1zM198 295h1v1h-1zM199 347h1v1h-1zM201 310h1v1h-1zM201 348h1v1h-1zM202 305h1v1h-1zM202 309h1v1h-1zM202 342h1v1h-1zM203 271h1v1h-1zM203 346h1v1h-1zM203 351h1v1h-1zM204 275h1v1h-1zM205 304h1v1h-1zM205 333h1v1h-1zM206 275h1v1h-1zM206 295h1v1h-1zM206 314h1v1h-1zM207 309h1v1h-1zM208 305h1v1h-1zM208 320h1v1h-1zM209 273h1v1h-1zM209 275h1v1h-1zM209 285h1v1h-1zM209 286h1v1h-1zM209 316h1v1h-1zM209 327h1v1h-1zM210 265h1v1h-1zM210 310h1v1h-1zM210 314h1v1h-1zM211 343h1v1h-1zM212 339h1v1h-1zM213 286h1v1h-1zM213 297h1v1h-1zM213 302h1v1h-1zM214 302h1v1h-1zM214 311h1v1h-1zM214 328h1v1h-1zM214 332h1v1h-1zM215 329h1v1h-1zM216 260h1v1h-1zM216 303h1v1h-1zM216 323h1v1h-1zM218 283h1v1h-1zM218 288h1v1h-1zM218 299h1v1h-1zM218 311h1v1h-1zM219 269h1v1h-1zM219 299h1v1h-1zM219 311h1v1h-1zM219 326h1v1h-1zM219 356h1v1h-1zM220 305h1v1h-1zM220 308h1v1h-1zM220 351h1v1h-1zM221 301h1v1h-1zM221 328h1v1h-1zM221 329h1v1h-1zM222 311h1v1h-1zM222 348h1v1h-1zM223 343h1v1h-1zM224 263h1v1h-1zM224 284h1v1h-1zM225 298h1v1h-1zM226 335h1v1h-1zM226 353h1v1h-1zM228 260h1v1h-1zM228 268h1v1h-1zM228 286h1v1h-1zM228 293h1v1h-1zM228 307h1v1h-1zM228 353h1v1h-1zM229 300h1v1h-1zM229 309h1v1h-1zM230 280h1v1h-1zM230 309h1v1h-1zM230 325h1v1h-1zM230 353h1v1h-1zM231 333h1v1h-1zM232 276h1v1h-1zM232 295h1v1h-1zM232 308h1v1h-1zM232 322h1v1h-1zM232 323h1v1h-1zM232 328h1v1h-1zM232 332h1v1h-1zM233 273h1v1h-1zM234 317h1v1h-1zM235 243h1v1h-1zM236 265h1v1h-1zM237 264h1v1h-1zM237 304h1v1h-1zM237 327h1v1h-1zM237 346h1v1h-1zM239 241h1v1h-1zM239 335h1v1h-1zM239 341h1v1h-1zM239 344h1v1h-1zM240 301h1v1h-1zM240 303h1v1h-1zM240 330h1v1h-1zM240 336h1v1h-1zM241 275h1v1h-1zM241 293h1v1h-1zM241 317h1v1h-1zM242 257h1v1h-1zM243 303h1v1h-1zM243 308h1v1h-1zM244 284h1v1h-1zM244 290h1v1h-1zM244 299h1v1h-1zM244 308h1v1h-1zM244 312h1v1h-1zM244 350h1v1h-1zM245 323h1v1h-1zM246 263h1v1h-1zM246 265h1v1h-1zM246 299h1v1h-1zM246 311h1v1h-1zM248 259h1v1h-1zM248 301h1v1h-1zM248 314h1v1h-1zM248 330h1v1h-1zM250 262h1v1h-1zM250 270h1v1h-1zM250 292h1v1h-1zM250 335h1v1h-1zM251 282h1v1h-1zM252 298h1v1h-1zM253 279h1v1h-1zM253 281h1v1h-1zM253 298h1v1h-1zM254 250h1v1h-1zM254 305h1v1h-1zM254 316h1v1h-1zM254 322h1v1h-1zM254 333h1v1h-1zM255 323h1v1h-1zM256 275h1v1h-1zM256 283h1v1h-1zM257 264h1v1h-1zM257 286h1v1h-1zM257 331h1v1h-1zM258 252h1v1h-1zM258 258h1v1h-1zM258 274h1v1h-1zM258 275h1v1h-1zM258 291h1v1h-1zM258 309h1v1h-1zM259 258h1v1h-1zM259 342h1v1h-1zM260 296h1v1h-1zM260 315h1v1h-1zM260 330h1v1h-1zM260 335h1v1h-1zM261 284h1v1h-1zM262 306h1v1h-1zM263 289h1v1h-1zM264 239h1v1h-1zM264 289h1v1h-1zM264 305h1v1h-1zM265 242h1v1h-1zM265 257h1v1h-1zM265 278h1v1h-1zM265 303h1v1h-1zM265 341h1v1h-1zM266 333h1v1h-1zM266 343h1v1h-1zM268 270h1v1h-1zM268 278h1v1h-1zM268 304h1v1h-1zM269 253h1v1h-1zM269 298h1v1h-1zM269 339h1v1h-1zM270 302h1v1h-1zM270 312h1v1h-1zM271 292h1v1h-1zM271 309h1v1h-1zM271 310h1v1h-1zM271 323h1v1h-1zM271 342h1v1h-1zM272 246h1v1h-1zM272 266h1v1h-1zM275 300h1v1h-1zM276 270h1v1h-1zM277 305h1v1h-1zM277 322h1v1h-1zM278 251h1v1h-1zM279 281h1v1h-1zM280 274h1v1h-1zM280 328h1v1h-1zM281 278h1v1h-1zM281 319h1v1h-1zM283 281h1v1h-1zM284 256h1v1h-1zM285 260h1v1h-1zM286 310h1v1h-1zM286 318h1v1h-1zM287 268h1v1h-1zM288 264h1v1h-1zM290 259h1v1h-1zM292 227h1v1h-1zM292 255h1v1h-1zM292 260h1v1h-1zM292 266h1v1h-1zM292 274h1v1h-1zM293 239h1v1h-1zM293 306h1v1h-1zM295 268h1v1h-1zM295 325h1v1h-1zM296 282h1v1h-1zM296 286h1v1h-1zM300 296h1v1h-1zM301 298h1v1h-1zM302 305h1v1h-1zM302 330h1v1h-1zM304 263h1v1h-1zM304 267h1v1h-1zM304 327h1v1h-1zM305 261h1v1h-1zM306 242h1v1h-1zM306 302h1v1h-1zM307 253h1v1h-1zM308 237h1v1h-1zM308 275h1v1h-1zM308 276h1v1h-1zM309 288h1v1h-1zM311 307h1v1h-1zM312 250h1v1h-1zM313 272h1v1h-1zM313 283h1v1h-1zM315 242h1v1h-1zM315 258h1v1h-1zM317 259h1v1h-1zM317 269h1v1h-1zM318 302h1v1h-1zM319 291h1v1h-1zM321 306h1v1h-1zM322 290h1v1h-1zM323 231h1v1h-1zM323 241h1v1h-1zM324 276h1v1h-1zM324 286h1v1h-1zM325 305h1v1h-1zM326 228h1v1h-1zM326 279h1v1h-1zM328 286h1v1h-1zM330 316h1v1h-1zM330 323h1v1h-1zM331 322h1v1h-1zM333 229h1v1h-1zM333 248h1v1h-1zM333 278h1v1h-1zM334 273h1v1h-1zM335 271h1v1h-1zM335 318h1v1h-1zM336 248h1v1h-1zM336 280h1v1h-1zM338 233h1v1h-1zM342 238h1v1h-1zM342 243h1v1h-1zM342 260h1v1h-1zM342 288h1v1h-1zM342 300h1v1h-1zM343 250h1v1h-1zM343 314h1v1h-1zM344 223h1v1h-1zM344 294h1v1h-1zM346 305h1v1h-1zM347 283h1v1h-1zM348 232h1v1h-1zM348 236h1v1h-1zM349 296h1v1h-1zM350 301h1v1h-1zM352 235h1v1h-1zM353 231h1v1h-1zM354 247h1v1h-1zM354 288h1v1h-1zM354 303h1v1h-1zM356 238h1v1h-1zM356 261h1v1h-1zM358 244h1v1h-1zM359 219h1v1h-1zM360 224h1v1h-1zM361 256h1v1h-1zM362 270h1v1h-1zM362 306h1v1h-1zM367 248h1v1h-1zM367 255h1v1h-1zM368 298h1v1h-1zM370 245h1v1h-1zM371 254h1v1h-1zM372 268h1v1h-1zM377 248h1v1h-1zM378 274h1v1h-1zM379 214h1v1h-1zM381 227h1v1h-1zM382 217h1v1h-1zM384 253h1v1h-1zM393 269h1v1h-1zM394 256h1v1h-1zM395 206h1v1h-1zM395 238h1v1h-1zM395 288h1v1h-1zM399 212h1v1h-1zM406 274h1v1h-1zM407 213h1v1h-1zM407 277h1v1h-1zM408 247h1v1h-1zM409 253h1v1h-1zM409 288h1v1h-1zM410 279h1v1h-1zM416 260h1v1h-1zM416 276h1v1h-1zM417 278h1v1h-1zM419 283h1v1h-1zM425 198h1v1h-1zM427 266h1v1h-1zM428 270h1v1h-1zM432 211h1v1h-1zM441 198h1v1h-1z" fill="#f0f000"/><polyline fill="none" stroke="#1ab8f8" stroke-width="1" stroke-linejoin="bevel" shape-rendering="crispEdges" points="55.5,283 55.5,236 56.5,236 56.5,191 57,191.5 60,195 64,193 67,191 71,195.5 74,193 76,190 79,192 81,193.5 84,191.5 87,195 90,192 93,191 94.5,195 97,191.5 98.5,194 101,191 104,192.9 105.7,195.4 109.4,195.4 112.3,191.7 114.8,195.4 116.5,193.75 117.75,195.4 119.4,201.25 120.7,192.5 121.9,191.25 123.6,195.4 125.7,191.25 127.75,192.1 129.4,196.25 133.2,191.25 137.3,196.25 139.4,191.7 141.5,195.8 143.6,191.7 145.7,194.2 147.75,192.5 149.4,192.9 151.5,192.5 152.75,195.4 154,197.1 156.5,192.5 159.8,191.25 162.3,196.25 164.4,191.25 166.5,194.2 169,195.4 170.7,194.2 172.3,191.25 174.4,195.4 176.5,194.2 179,191.25 180.7,192.5 187.3,192.5 189,193.3 191.5,193.75 194,195.4 196.5,195.4 199,192.1 200.7,193.3 201.9,198.3 203.3,207.5 205,195.4 206.7,196.7 212.1,192.1 215,193.3 218.3,195.8 220,193.3 221.25,191.25 222.5,196.7 223.75,204.6 225,192.5 228.75,192.5 231.25,199.6 233.3,191.7 235,191.25 237.5,193.3 239.2,193.3 241.25,195.4 243.3,193.3 245.4,195.4 247.9,192.1 250,192.3 252.1,193.3 254.2,192.3 255.8,192.3 258.3,195.7 260,192.3 265,192.3 266.7,195.4 268.75,195.4 270.8,193.3 272.5,194.2 274.6,195.7 276.7,194.2 278.3,191.25 280.4,193.3 281.7,192.3 283.3,192.3 286.25,195.8 288.3,192.3 291.25,192.3 294.2,196.7 296.25,193.3 299.6,196.7 302.5,194.2 304.6,194.2 307.5,196.7 311.25,193.2 313.75,196.7 315.8,196.7 319.2,192.3 321.7,195.4 323.3,196.7 326.7,192.3 329.2,195.4 330.8,194.2 333.3,196.7 336.7,193.3 339.2,193.3 341.25,191.25 343.75,193.3 347.5,196.7 349.6,191.25 352.1,191.25 354.6,195.4 356.25,196.7 359.2,194.2 361.7,194.2 363.3,195.4 365,195.4 366.7,193.3 369.6,192.3 372.5,192.3 374.2,195.4 375.8,194.2 378.75,196.7 382.5,191.25 384.6,193.3 386.7,194.2 388.3,191.25 390.4,194.2 392.5,196.7 394.2,191.25 395.8,192.3 397.5,193.3 398,194.2 399.7,196.25 403.8,196.25 405.9,194.2 407.6,197.5 409.7,195.4 411.75,195.4 415.1,193.3 417.6,197.5 420.1,193.3 422.6,194.2 425.5,192.1 427.2,195.4 429.25,192.3 431.3,195.4 433.8,195.4 435.5,198.3 437.2,192.3 438.8,191.25 440.5,191.25 444.7,196.25"/></svg>
<div class="t" style="left:55px;top:162px;font-size:11px;color:#000;letter-spacing:-0.3px;">MB/s</div>
<div class="t" style="left:431px;top:162px;font-size:11px;color:#000;letter-spacing:-0.3px;">ms</div>
<div class="t" style="left:58px;top:176px;font-size:11px;color:#c8c8c8;letter-spacing:-0.15px;">Registered</div>
<div class="t" style="left:30px;top:169px;font-size:11px;color:#000;letter-spacing:-0.4px;width:20px;text-align:right;">35</div>
<div class="t" style="left:450px;top:169px;font-size:11px;color:#000;letter-spacing:-0.4px;">35</div>
<div class="t" style="left:30px;top:213px;font-size:11px;color:#000;letter-spacing:-0.4px;width:20px;text-align:right;">30</div>
<div class="t" style="left:450px;top:213px;font-size:11px;color:#000;letter-spacing:-0.4px;">30</div>
<div class="t" style="left:30px;top:257px;font-size:11px;color:#000;letter-spacing:-0.4px;width:20px;text-align:right;">25</div>
<div class="t" style="left:450px;top:257px;font-size:11px;color:#000;letter-spacing:-0.4px;">25</div>
<div class="t" style="left:30px;top:301px;font-size:11px;color:#000;letter-spacing:-0.4px;width:20px;text-align:right;">20</div>
<div class="t" style="left:450px;top:301px;font-size:11px;color:#000;letter-spacing:-0.4px;">20</div>
<div class="t" style="left:30px;top:345px;font-size:11px;color:#000;letter-spacing:-0.4px;width:20px;text-align:right;">15</div>
<div class="t" style="left:450px;top:345px;font-size:11px;color:#000;letter-spacing:-0.4px;">15</div>
<div class="t" style="left:30px;top:389px;font-size:11px;color:#000;letter-spacing:-0.4px;width:20px;text-align:right;">10</div>
<div class="t" style="left:450px;top:389px;font-size:11px;color:#000;letter-spacing:-0.4px;">10</div>
<div class="t" style="left:30px;top:433px;font-size:11px;color:#000;letter-spacing:-0.4px;width:20px;text-align:right;">5</div>
<div class="t" style="left:450px;top:433px;font-size:11px;color:#000;letter-spacing:-0.4px;">5</div>
<div class="t" style="left:35px;top:489px;font-size:11px;color:#000;letter-spacing:-0.2px;width:40px;text-align:center;">0</div>
<div class="t" style="left:74px;top:489px;font-size:11px;color:#000;letter-spacing:-0.2px;width:40px;text-align:center;">50</div>
<div class="t" style="left:113px;top:489px;font-size:11px;color:#000;letter-spacing:-0.2px;width:40px;text-align:center;">100</div>
<div class="t" style="left:152px;top:489px;font-size:11px;color:#000;letter-spacing:-0.2px;width:40px;text-align:center;">150</div>
<div class="t" style="left:191px;top:489px;font-size:11px;color:#000;letter-spacing:-0.2px;width:40px;text-align:center;">200</div>
<div class="t" style="left:230px;top:489px;font-size:11px;color:#000;letter-spacing:-0.2px;width:40px;text-align:center;">250</div>
<div class="t" style="left:269px;top:489px;font-size:11px;color:#000;letter-spacing:-0.2px;width:40px;text-align:center;">300</div>
<div class="t" style="left:308px;top:489px;font-size:11px;color:#000;letter-spacing:-0.2px;width:40px;text-align:center;">350</div>
<div class="t" style="left:347px;top:489px;font-size:11px;color:#000;letter-spacing:-0.2px;width:40px;text-align:center;">400</div>
<div class="t" style="left:386px;top:489px;font-size:11px;color:#000;letter-spacing:-0.2px;width:40px;text-align:center;">450</div>
<div class="t" style="left:429px;top:489px;font-size:11px;color:#000;letter-spacing:0px;">500gB</div>
<div id="start">Start</div>
<div class="sep" style="top:187px"></div>
<div class="sep" style="top:226px"></div>
<div class="sep" style="top:298px"></div>
<div class="sep" style="top:402px"></div>
<div class="radio on" style="left:480px;top:194px"></div>
<div class="radio" style="left:480px;top:210px"></div>
<div class="t" style="left:497px;top:194px;font-size:11px;color:#000;letter-spacing:-0.3px;">Read</div>
<div class="t" style="left:497px;top:210px;font-size:11px;color:#000;letter-spacing:-0.3px;">Write</div>
<div class="chk" style="left:480px;top:234px"></div>
<div class="t" style="left:497px;top:234px;font-size:11px;color:#000;letter-spacing:-0.3px;">Short stroke</div>
<div id="spin"><span>40</span><svg style="position:absolute;left:44px;top:1px" width="16" height="17" viewBox="0 0 16 17"><rect x="0.5" y="0.5" width="15" height="7.5" fill="#f2f2f2" stroke="#c4c4c4"/><rect x="0.5" y="9" width="15" height="7.5" fill="#ececec" stroke="#c4c4c4"/><path d="M5 6H11L8 3Z" fill="#a0a0a0"/><path d="M5 11H11L8 14Z" fill="#a0a0a0"/></svg></div>
<div class="t" style="left:553px;top:258px;font-size:11px;color:#000;letter-spacing:-0.3px;">gB</div>
<div class="chk" style="left:480px;top:283px"><svg width="11" height="11" viewBox="0 0 11 11"><path d="M2.3 6L4.6 9.2L9.3 2.2" stroke="#3a4ea8" stroke-width="1.9" fill="none" stroke-linecap="round" stroke-linejoin="round"/></svg></div>
<div class="t" style="left:497px;top:284px;font-size:11px;color:#000;letter-spacing:-0.3px;">Transfer rate</div>
<div class="t" style="left:481px;top:302px;font-size:11px;color:#000;letter-spacing:-0.6px;">Minimum</div>
<div class="t" style="left:481px;top:334px;font-size:11px;color:#000;letter-spacing:-0.6px;">Maximum</div>
<div class="t" style="left:480px;top:365px;font-size:11px;color:#000;letter-spacing:-0.3px;">Average</div>
<div class="vb" style="top:317px;color:#1cbcff">22.9 MB/s</div>
<div class="vb" style="top:349px;color:#1cbcff">33.3 MB/s</div>
<div class="vb" style="top:380px;color:#1cbcff">32.8 MB/s</div>
<div class="chk" style="left:480px;top:409px"><svg width="11" height="11" viewBox="0 0 11 11"><path d="M2.3 6L4.6 9.2L9.3 2.2" stroke="#3a4ea8" stroke-width="1.9" fill="none" stroke-linecap="round" stroke-linejoin="round"/></svg></div>
<div class="t" style="left:497px;top:408px;font-size:11px;color:#000;letter-spacing:-0.3px;">Access time</div>
<div class="vb" style="top:424px;color:#f8f820">18.1 ms</div>
<div class="chk" style="left:480px;top:443px"><svg width="11" height="11" viewBox="0 0 11 11"><path d="M2.3 6L4.6 9.2L9.3 2.2" stroke="#3a4ea8" stroke-width="1.9" fill="none" stroke-linecap="round" stroke-linejoin="round"/></svg></div>
<div class="t" style="left:497px;top:442px;font-size:11px;color:#000;letter-spacing:-0.3px;">Burst rate</div>
<div class="vb" style="top:458px;color:#ffffff">33.9 MB/s</div>
<div class="t" style="left:480px;top:475px;font-size:11px;color:#000;letter-spacing:-0.3px;">CPU usage</div>
<div class="vb" style="top:490px;color:#ffffff">1.2%</div>
</body></html>
